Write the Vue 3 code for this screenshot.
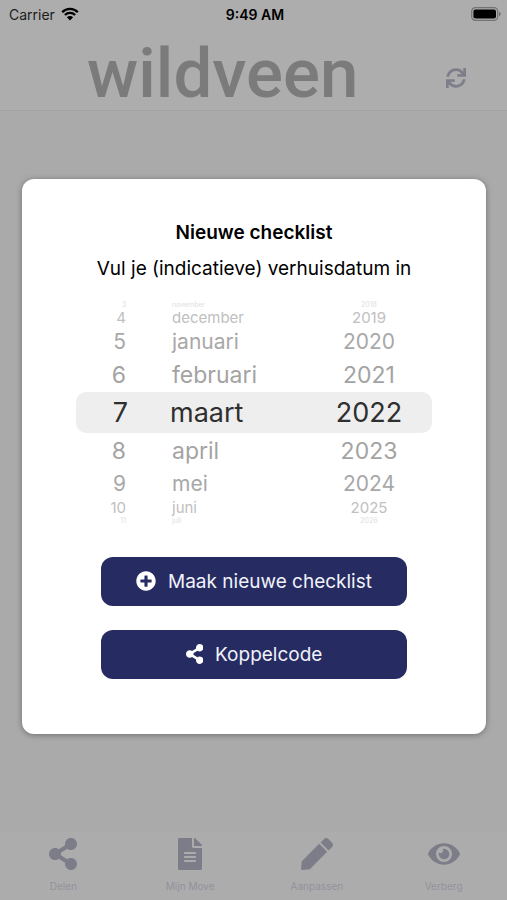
<script setup>
import { reactive, computed } from 'vue'

const icons = {
  sync: { box: '0 0 512 512', d: 'M440.65 12.57l4 82.77A247.16 247.16 0 0 0 255.83 8C134.73 8 33.91 94.92 12.29 209.82A12 12 0 0 0 24.09 224h49.05a12 12 0 0 0 11.67-9.26 175.91 175.91 0 0 1 317-56.94l-101.46-4.86a12 12 0 0 0-12.57 12v47.41a12 12 0 0 0 12 12H500a12 12 0 0 0 12-12V12a12 12 0 0 0-12-12h-47.37a12 12 0 0 0-11.98 12.57zM255.83 432a175.61 175.61 0 0 1-146-77.8l101.8 4.87a12 12 0 0 0 12.57-12v-47.4a12 12 0 0 0-12-12H12a12 12 0 0 0-12 12V500a12 12 0 0 0 12 12h47.35a12 12 0 0 0 12-12.6l-4.15-82.57A247.17 247.17 0 0 0 255.83 504c121.11 0 221.93-86.92 243.55-201.82a12 12 0 0 0-11.8-14.18h-49.05a12 12 0 0 0-11.67 9.26A175.86 175.86 0 0 1 255.83 432z' },
  share: { box: '0 0 448 512', d: 'M352 320c-22.608 0-43.387 7.819-59.79 20.895l-102.486-64.054a96.551 96.551 0 0 0 0-41.683l102.486-64.054C308.613 184.181 329.392 192 352 192c53.019 0 96-42.981 96-96S405.019 0 352 0s-96 42.981-96 96c0 7.158.79 14.13 2.276 20.841L155.79 180.895C139.387 167.819 118.608 160 96 160c-53.019 0-96 42.981-96 96s42.981 96 96 96c22.608 0 43.387-7.819 59.79-20.895l102.486 64.054A96.301 96.301 0 0 0 256 416c0 53.019 42.981 96 96 96s96-42.981 96-96-42.981-96-96-96z' },
  file: { box: '0 0 384 512', d: 'M224 136V0H24C10.7 0 0 10.7 0 24v464c0 13.3 10.7 24 24 24h336c13.3 0 24-10.7 24-24V160H248c-13.2 0-24-10.8-24-24zm64 236c0 6.6-5.4 12-12 12H108c-6.6 0-12-5.4-12-12v-8c0-6.6 5.4-12 12-12h168c6.6 0 12 5.4 12 12v8zm0-64c0 6.6-5.4 12-12 12H108c-6.6 0-12-5.4-12-12v-8c0-6.6 5.4-12 12-12h168c6.6 0 12 5.4 12 12v8zm0-72v8c0 6.6-5.4 12-12 12H108c-6.6 0-12-5.4-12-12v-8c0-6.6 5.4-12 12-12h168c6.6 0 12 5.4 12 12zm96-114.1v6.1H256V0h6.1c6.4 0 12.5 2.5 17 7l97.9 98c4.5 4.5 7 10.6 7 16.9z' },
  pen: { box: '0 0 512 512', d: 'M290.74 93.24l128.02 128.02-277.99 277.99-114.14 12.6C11.35 513.54-1.56 500.62.14 485.34l12.7-114.22 277.9-277.88zm207.2-19.06l-60.11-60.11c-18.75-18.75-49.16-18.75-67.91 0l-56.55 56.55 128.02 128.02 56.55-56.55c18.75-18.76 18.75-49.16 0-67.91z' },
  eye: { box: '0 0 576 512', d: 'M572.52 241.4C518.29 135.59 410.93 64 288 64S57.68 135.64 3.48 241.41a32.35 32.35 0 0 0 0 29.19C57.71 376.41 165.07 448 288 448s230.32-71.64 284.52-177.41a32.35 32.35 0 0 0 0-29.19zM288 400a144 144 0 1 1 144-144 143.93 143.93 0 0 1-144 144zm0-240a95.31 95.31 0 0 0-25.31 3.79 47.85 47.85 0 0 1-66.9 66.9A95.78 95.78 0 1 0 288 160z' },
  plus: { box: '0 0 512 512', d: 'M256 8C119 8 8 119 8 256s111 248 248 248 248-111 248-248S393 8 256 8zm144 276c0 6.6-5.4 12-12 12h-92v92c0 6.6-5.4 12-12 12h-56c-6.6 0-12-5.4-12-12v-92h-92c-6.6 0-12-5.4-12-12v-56c0-6.6 5.4-12 12-12h92v-92c0-6.6 5.4-12 12-12h56c6.6 0 12 5.4 12 12v92h92c6.6 0 12 5.4 12 12v56z' }
}

const tabs = [
  { label: 'Delen', icon: icons.share },
  { label: 'Mijn Move', icon: icons.file },
  { label: 'Aanpassen', icon: icons.pen },
  { label: 'Verberg', icon: icons.eye }
]

const months = ['januari', 'februari', 'maart', 'april', 'mei', 'juni', 'juli', 'augustus', 'september', 'oktober', 'november', 'december']
const date = reactive({ day: 7, month: 2, year: 2022 })
const offsets = [-4, -3, -2, -1, 0, 1, 2, 3, 4]
const wrap = (n, size) => ((n % size) + size) % size

const wheels = computed(() => [
  { key: 'day', label: 'Dag', rows: offsets.map(o => wrap(date.day - 1 + o, 31) + 1) },
  { key: 'month', label: 'Maand', rows: offsets.map(o => months[wrap(date.month + o, 12)]) },
  { key: 'year', label: 'Jaar', rows: offsets.map(o => date.year + o) }
])

function turn(key, step) {
  if (key === 'day') date.day = wrap(date.day - 1 + step, 31) + 1
  else if (key === 'month') date.month = wrap(date.month + step, 12)
  else date.year += step
}
</script>

<template>
  <div class="screen">
    <header class="top">
      <div class="status">
        <span class="carrier">
          Carrier
          <svg class="wifi" viewBox="0 0 18 14" aria-hidden="true">
            <path d="M1.2 5.2a11 11 0 0 1 15.6 0M3.9 8a7.2 7.2 0 0 1 10.2 0" fill="none" stroke="currentColor" stroke-width="2.3" />
            <path d="M9 13.6L5.9 10.3a4.4 4.4 0 0 1 6.2 0z" fill="currentColor" />
          </svg>
        </span>
        <span class="clock">9:49 AM</span>
        <svg class="battery" viewBox="0 0 30 14" aria-hidden="true">
          <rect x="0.7" y="0.7" width="26" height="12.6" rx="3.6" fill="none" stroke="#727272" stroke-width="1.2" />
          <rect x="2.4" y="2.4" width="22.6" height="9.2" rx="2" fill="#000" />
          <path d="M28 4.8c2.3.8 2.3 3.6 0 4.4z" fill="#727272" />
        </svg>
      </div>
      <div class="brand-row">
        <span class="brand">wildveen</span>
        <button class="refresh" type="button" aria-label="Vernieuwen">
          <svg :viewBox="icons.sync.box"><path :d="icons.sync.d" /></svg>
        </button>
      </div>
    </header>

    <main class="content"></main>

    <nav class="tabs">
      <a v-for="tab in tabs" :key="tab.label" class="tab" href="#">
        <svg :viewBox="tab.icon.box" aria-hidden="true"><path :d="tab.icon.d" /></svg>
        <span>{{ tab.label }}</span>
      </a>
    </nav>

    <div class="overlay">
      <form class="modal" role="dialog" aria-labelledby="modal-title" @submit.prevent>
        <h1 id="modal-title">Nieuwe checklist</h1>
        <p>Vul je (indicatieve) verhuisdatum in</p>

        <div class="picker">
          <ul
            v-for="wheel in wheels"
            :key="wheel.key"
            :class="['wheel', wheel.key]"
            role="listbox"
            tabindex="0"
            :aria-label="wheel.label"
            @keydown.up.prevent="turn(wheel.key, -1)"
            @keydown.down.prevent="turn(wheel.key, 1)"
          >
            <li
              v-for="(row, i) in wheel.rows"
              :key="offsets[i]"
              :class="['row', 'far-' + Math.abs(offsets[i])]"
              role="option"
              :aria-selected="offsets[i] === 0"
              @click="turn(wheel.key, offsets[i])"
            >{{ row }}</li>
          </ul>
        </div>

        <div class="actions">
          <button class="action" type="submit">
            <svg :viewBox="icons.plus.box" aria-hidden="true"><path :d="icons.plus.d" /></svg>
            Maak nieuwe checklist
          </button>
          <button class="action" type="button">
            <svg :viewBox="icons.share.box" aria-hidden="true"><path :d="icons.share.d" /></svg>
            Koppelcode
          </button>
        </div>
      </form>
    </div>
  </div>
</template>

<style>
body {
  background: #aaaaaa;
}
</style>

<style scoped>
.screen {
  position: relative;
  display: flex;
  flex-direction: column;
  min-height: 100vh;
  background: #aaaaaa;
  color: #000;
  font-family: Inter, "Liberation Sans", sans-serif;
}

svg {
  display: block;
  fill: currentColor;
}

.top {
  background: #adadad;
  border-bottom: 1px solid #a3a3a3;
}

.status {
  display: grid;
  grid-template-columns: 1fr auto 1fr;
  align-items: center;
  height: 28px;
  padding: 0 6px 0 9px;
  font-size: 14px;
}

.carrier {
  display: flex;
  align-items: center;
  gap: 6px;
  color: #1c1c1c;
}

.wifi {
  width: 18px;
  height: 14px;
  color: #000;
}

.clock {
  font-weight: 600;
}

.battery {
  justify-self: end;
  width: 30px;
  height: 14px;
}

.brand-row {
  display: flex;
  align-items: center;
  justify-content: space-between;
  height: 72px;
  padding: 10px 41px 0 87px;
}

.brand {
  color: #7b7b7b;
  font-family: Roboto, sans-serif;
  font-size: 69px;
  font-weight: 500;
  line-height: 72px;
}

.refresh {
  margin-top: 8px;
  padding: 0;
  border: 0;
  background: none;
  color: #7e7e8b;
}

.refresh svg {
  width: 20px;
  height: 20px;
}

.content {
  flex: 1;
}

.tabs {
  display: grid;
  grid-template-columns: repeat(4, 1fr);
  padding: 6px 0 8px;
  background: #acacac;
}

.tab {
  display: flex;
  flex-direction: column;
  align-items: center;
  gap: 10px;
  font-size: 10px;
  line-height: 12px;
  text-decoration: none;
}

.tab svg {
  height: 32px;
  max-width: 32px;
  color: #7d7d8a;
}

.tab span {
  color: #92929c;
}

.overlay {
  position: absolute;
  inset: 0;
  display: flex;
  align-items: center;
  justify-content: center;
  padding: 12px 21px 0 22px;
}

.modal {
  box-sizing: border-box;
  width: 100%;
  padding: 40px 54px 55px;
  border-radius: 12px;
  background: #fff;
  box-shadow: 0 1px 6px rgba(0, 0, 0, 0.35);
  text-align: center;
}

h1,
p {
  margin: 0;
  font-size: 19px;
  line-height: 28px;
}

h1 {
  font-weight: 600;
}

p {
  margin-top: 8px;
  margin-bottom: 18px;
  white-space: nowrap;
}

.picker {
  display: grid;
  grid-template-columns: 52px 1fr 126px;
}

.picker::before {
  content: "";
  grid-area: 1 / 1 / 2 / -1;
  align-self: center;
  height: 41px;
  border-radius: 10px;
  background: #eeeeee;
}

.wheel {
  grid-row: 1;
  margin: 0;
  padding: 0;
  list-style: none;
  outline: none;
}

.day {
  grid-column: 1;
}

.month {
  grid-column: 2;
  padding-left: 42px;
}

.year {
  grid-column: 3;
}

.row {
  display: flex;
  align-items: center;
  cursor: pointer;
}

.day .row {
  justify-content: flex-end;
}

.day .row:not(.far-0) {
  padding-right: 2px;
}

.month .row:not(.far-0) {
  padding-left: 2px;
}

.year .row {
  justify-content: center;
}

.far-0 {
  height: 40px;
  color: #2f2f2f;
  font-size: 27px;
}

.far-1 {
  height: 36px;
  color: #a3a3a3;
  font-size: 23px;
}

.far-2 {
  height: 30px;
  color: #a8a8a8;
  font-size: 21px;
}

.far-3 {
  height: 18px;
  color: #c0c0c0;
  font-size: 15px;
  line-height: 18px;
}

.far-4 {
  height: 8px;
  color: #dedede;
  font-size: 7px;
  line-height: 8px;
}

.actions {
  display: grid;
  gap: 24px;
  padding: 32px 25px 0;
}

.action {
  display: flex;
  align-items: center;
  justify-content: center;
  gap: 12px;
  height: 49px;
  padding: 0;
  border: 0;
  border-radius: 12px;
  background: #262c62;
  color: #f1f2fa;
  font-family: inherit;
  font-size: 19px;
}

.action svg {
  height: 20px;
  color: #fff;
}
</style>
